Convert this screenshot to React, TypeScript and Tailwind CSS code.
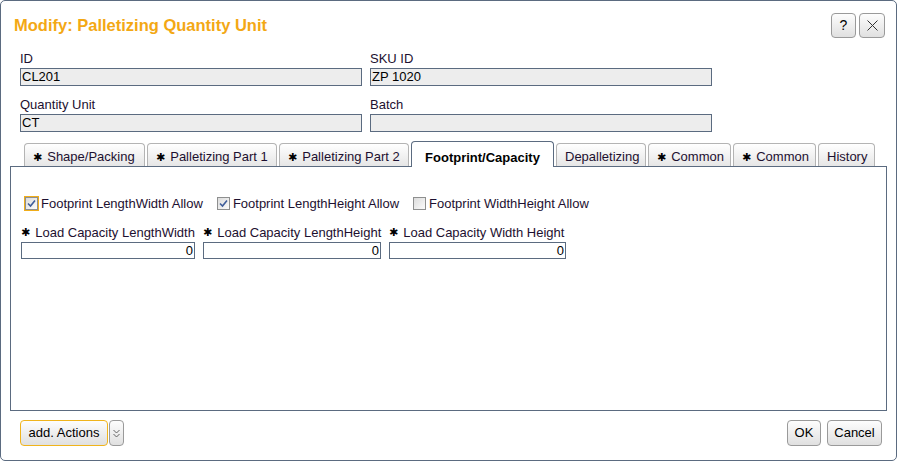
import React from "react";

const font = { fontFamily: '"Liberation Sans", Arial, sans-serif' };

function Star() {
  return (
    <span className="mr-[5px] inline-block text-[11px] leading-none text-black" style={{ fontFamily: '"DejaVu Sans", sans-serif' }}>
      ✱
    </span>
  );
}

function Checkbox({ checked, focused }: { checked?: boolean; focused?: boolean }) {
  return (
    <span
      className={
        "flex h-[15px] w-[15px] items-center justify-center " +
        (focused ? "border border-[#f0ad1a]" : "border border-transparent")
      }
    >
      <span className="flex h-[13px] w-[13px] items-center justify-center border border-[#8e8f8f] bg-gradient-to-br from-[#dcdcdc] to-[#fbfbfb]">
        {checked && (
          <svg width="9" height="9" viewBox="0 0 9 9">
            <path d="M1 4.5 L3.5 7 L8 1.5" fill="none" stroke="#3f5d9a" strokeWidth="1.6" />
          </svg>
        )}
      </span>
    </span>
  );
}

function Tab({ label, width, star, active }: { label: string; width: string; star?: boolean; active?: boolean }) {
  if (active) {
    return (
      <div
        className={
          width +
          " relative -mb-px flex h-[26px] items-center justify-center rounded-t-[4px] border border-b-0 border-[#5b6b80] bg-white pt-[6px] text-[13px] font-bold text-black"
        }
      >
        {label}
      </div>
    );
  }
  return (
    <div
      className={
        width +
        " flex h-[23px] items-center whitespace-nowrap rounded-t-[4px] border border-b-0 border-[#b4b4b4] bg-gradient-to-b from-[#ffffff] to-[#e6e6e6] pl-[8px] pt-[4px] text-[13px] text-[#1d1030]"
      }
    >
      {star && <Star />}
      {label}
    </div>
  );
}

function Field({ label, value }: { label: string; value: string }) {
  return (
    <div className="w-[342px]">
      <div className="text-[13px] leading-[15px] text-[#1d1030]">{label}</div>
      <div className="mt-[2px] h-[18px] border border-[#5b6b80] bg-[#ededed] pl-[1px] text-[13px] leading-[16px] text-black">
        {value}
      </div>
    </div>
  );
}

function Capacity({ label, width }: { label: string; width: string }) {
  return (
    <div className={width}>
      <div className="flex items-center whitespace-nowrap text-[13px] leading-[15px] text-[#1d1030]">
        <Star />
        {label}
      </div>
      <div className="mt-[2px] h-[17px] border border-[#5b6b80] bg-white pr-[1px] text-right text-[13px] leading-[15px] text-black">
        0
      </div>
    </div>
  );
}

function SmallButton({ children, className }: { children: React.ReactNode; className: string }) {
  return (
    <div
      className={
        "flex items-center justify-center rounded-[4px] border bg-gradient-to-b from-[#fdfdfd] to-[#e0e0e0] text-[13px] text-black " +
        className
      }
    >
      {children}
    </div>
  );
}

export default function App() {
  return (
    <div className="h-[461px] w-[897px] bg-white" style={font}>
      <div className="flex h-full w-full flex-col rounded-[5px] border border-[#5b6b80] bg-white">
        <div className="mt-[12px] flex h-[25px] items-center justify-between pl-[13px] pr-[11px]">
          <h1 className="text-[16.5px] font-bold text-[#f3a814]">Modify: Palletizing Quantity Unit</h1>
          <div className="flex gap-[3px]">
            <SmallButton className="h-[25px] w-[25px] border-[#9a9a9a] text-[14px]">?</SmallButton>
            <SmallButton className="h-[25px] w-[26px] border-[#9a9a9a]">
              <svg width="11" height="11" viewBox="0 0 11 11">
                <path d="M0.5 0.5 L10.5 10.5 M10.5 0.5 L0.5 10.5" stroke="#333" strokeWidth="1" />
              </svg>
            </SmallButton>
          </div>
        </div>

        <div className="mt-[13px] flex gap-[8px] pl-[19px]">
          <Field label="ID" value="CL201" />
          <Field label="SKU ID" value="ZP 1020" />
        </div>
        <div className="mt-[11px] flex gap-[8px] pl-[19px]">
          <Field label="Quantity Unit" value="CT" />
          <Field label="Batch" value="" />
        </div>

        <div className="mx-[9px] mt-[9px] flex flex-1 flex-col">
          <div className="flex items-end gap-[2px] pl-[14px]">
            <Tab label="Shape/Packing" width="w-[121px]" star />
            <Tab label="Palletizing Part 1" width="w-[130px]" star />
            <Tab label="Palletizing Part 2" width="w-[130px]" star />
            <Tab label="Footprint/Capacity" width="w-[143px]" active />
            <Tab label="Depalletizing" width="w-[90px]" />
            <Tab label="Common" width="w-[83px]" star />
            <Tab label="Common" width="w-[83px]" star />
            <Tab label="History" width="w-[57px]" />
          </div>
          <div className="h-[245px] w-[877px] border border-[#5b6b80] bg-white pl-[10px] pt-[27px]">
            <div className="ml-[3px] flex items-center text-[13px] text-[#1d1030]">
              <div className="flex items-center gap-[2px]">
                <Checkbox checked focused />
                <span>Footprint LengthWidth Allow</span>
              </div>
              <div className="ml-[13px] flex items-center gap-[2px]">
                <Checkbox checked />
                <span>Footprint LengthHeight Allow</span>
              </div>
              <div className="ml-[13px] flex items-center gap-[2px]">
                <Checkbox />
                <span>Footprint WidthHeight Allow</span>
              </div>
            </div>
            <div className="mt-[11px] flex gap-[8px]">
              <Capacity label="Load Capacity LengthWidth" width="w-[174px]" />
              <Capacity label="Load Capacity LengthHeight" width="w-[178px]" />
              <Capacity label="Load Capacity Width Height" width="w-[177px]" />
            </div>
          </div>
        </div>

        <div className="mb-[14px] mt-[9px] flex items-center justify-between pl-[19px] pr-[14px]">
          <div className="flex">
            <SmallButton className="h-[26px] w-[88px] border-[#f0b41c]">add. Actions</SmallButton>
            <SmallButton className="ml-[1px] h-[26px] w-[15px] border-[#9a9a9a]">
              <svg width="7" height="9" viewBox="0 0 7 9">
                <path d="M0.5 1 L3.5 4 L6.5 1 M0.5 5 L3.5 8 L6.5 5" fill="none" stroke="#555" strokeWidth="0.9" />
              </svg>
            </SmallButton>
          </div>
          <div className="flex gap-[6px]">
            <SmallButton className="h-[26px] w-[34px] border-[#9a9a9a]">OK</SmallButton>
            <SmallButton className="h-[26px] w-[55px] border-[#9a9a9a]">Cancel</SmallButton>
          </div>
        </div>
      </div>
    </div>
  );
}
